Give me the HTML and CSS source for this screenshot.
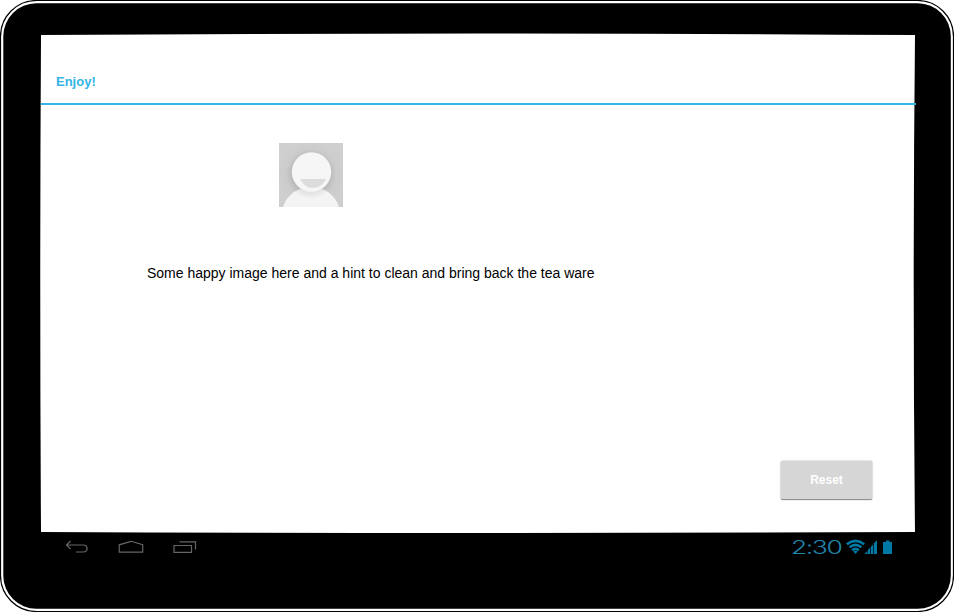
FILE: index.html
```html
<!DOCTYPE html>
<html lang="en">
<head>
<meta charset="utf-8">
<title>Enjoy!</title>
<link rel="stylesheet" href="styles.css">
</head>
<body>
<div class="tablet">
  <svg class="bezel" viewBox="0 0 954 612" aria-hidden="true">
    <rect x=".5" y=".5" width="953" height="611" rx="36" fill="#fff" stroke="#000" stroke-width="1.2"/>
    <rect x="3.3" y="3.3" width="947.5" height="605.4" rx="33"/>
    <path d="M41 35Q478 32 915 35Q912.400 283 915 532Q478 534 41 532Q39.500 283 41 35Z" fill="#fff"/>
  </svg>
  <main class="screen">
    <header class="title">Enjoy!</header>
    <section class="content">
      <svg class="avatar" viewBox="0 0 64 64" aria-hidden="true">
        <defs>
          <radialGradient id="shade" cx="32" cy="32" r="40" gradientUnits="userSpaceOnUse">
            <stop offset=".4" stop-color="#c8c8c8"/>
            <stop offset=".85" stop-color="#cfcfcf"/>
          </radialGradient>
          <radialGradient id="halo" cx="32" cy="31" r="25" gradientUnits="userSpaceOnUse">
            <stop offset=".76" stop-color="#000" stop-opacity=".07"/>
            <stop offset="1" stop-color="#000" stop-opacity="0"/>
          </radialGradient>
        </defs>
        <rect width="64" height="64" fill="url(#shade)"/>
        <path d="M4 64C8 52 18 44 32 44S56 52 60 64Z" fill="#f4f4f4"/>
        <circle cx="32" cy="31" r="25" fill="url(#halo)"/>
        <circle cx="32.500" cy="29" r="19.700" fill="#f6f6f6"/>
        <path d="M21 36H47C44 42 39.500 45 34 45S24 42 21 36Z" fill="#dcdcdc"/>
      </svg>
      <p class="message">Some happy image here and a hint to clean and bring back the tea ware</p>
    </section>
    <button class="reset">Reset</button>
  </main>
  <footer class="navbar">
    <svg class="nav" viewBox="0 0 132 16" aria-hidden="true">
      <path d="M5.500 1L1.500 5L5.500 9M2 5H18C23.500 5 23.500 12 18 12H11"/>
      <path d="M54.200 12.200V4.800L66 1.300L77.700 4.800V12.200Z"/>
      <path d="M109 5.500H126.500V12.300H109ZM114.500 1.800H130.500V9.500"/>
    </svg>
    <svg class="status" viewBox="0 -6 102 30">
      <text class="clock" x="-1" y="15" textLength="50.300" lengthAdjust="spacingAndGlyphs">2:30</text>
      <g class="wifi">
        <path d="M54.800 5.200Q63.500-1.600 72.200 5.200"/>
        <path d="M57.700 8.300Q63.500 3.600 69.300 8.300"/>
        <path d="M60.200 11.200Q63.500 8.600 66.800 11.200"/>
      </g>
      <path d="M61.300 12.600Q63.500 10.900 65.700 12.600L63.500 14.900Z"/>
      <path d="M72.300 15L75.300 12V15ZM75.800 15V11L78 8.800V15ZM78.700 15V8L81 5.700V15ZM81.700 15V4.500L85 1.200V15Z"/>
      <path d="M91 3H94V1.500H97.500V3H100V15H91Z"/>
    </svg>
  </footer>
</div>
</body>
</html>
```

FILE: styles.css
```css
* { box-sizing: border-box; }

body {
  margin: 0;
  background: #fff;
  font-family: "Liberation Sans", Arial, sans-serif;
  overflow: hidden;
}

.tablet {
  position: relative;
  width: 954px;
  height: 612px;
  padding: 35px 38px 0 41px;
}

.bezel {
  position: absolute;
  inset: 0;
  width: 954px;
  height: 612px;
  z-index: -1;
}

.screen {
  display: flex;
  flex-direction: column;
  height: 497px;
}

.title {
  height: 70px;
  padding: 39px 15px 0;
  border-bottom: 2px solid #33b5e5;
  color: #33b5e5;
  font-size: 13px;
  font-weight: bold;
  line-height: 16px;
}

.content {
  display: flex;
  flex-direction: column;
  align-items: flex-start;
  padding: 38px 0 0 106px;
}

.avatar {
  display: block;
  width: 64px;
  height: 64px;
  margin-left: 132px;
}

.message {
  margin: 58px 0 0;
  color: #000;
  font-size: 14px;
  line-height: 16px;
  white-space: nowrap;
}

.reset {
  width: 91px;
  height: 38px;
  margin: auto 44.5px 33px auto;
  padding: 0 0 0 1px;
  border: 0;
  border-radius: 1px;
  background: #d6d6d6;
  box-shadow: 0 1px 1px #888, 0 0 2px #aaa;
  color: #fff;
  font: bold 12px "Liberation Sans", Arial, sans-serif;
}

.navbar {
  display: flex;
  justify-content: space-between;
  padding: 1px 22px 0 24px;
}

.nav {
  width: 132px;
  height: 16px;
  margin-top: 7px;
  fill: none;
  stroke: #666;
  stroke-width: 1.2;
}

.status {
  width: 102px;
  height: 30px;
  overflow: visible;
  fill: #0079a5;
}

.clock {
  fill: #2386ad;
  font: 300 18px Inter, sans-serif;
  letter-spacing: -1px;
}

.wifi {
  fill: none;
  stroke: #0079a5;
  stroke-width: 2.7;
}
```
